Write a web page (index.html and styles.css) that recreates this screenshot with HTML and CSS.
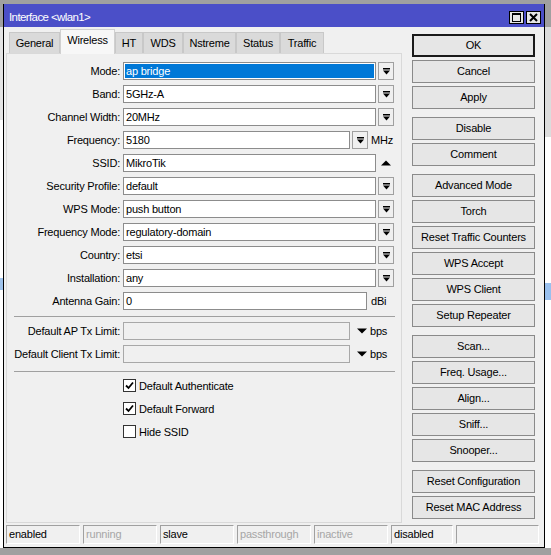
FILE: index.html
```html
<!DOCTYPE html>
<html>
<head>
<meta charset="utf-8">
<link rel="stylesheet" href="styles.css">
</head>
<body>
<div class="screen">
  <div class="bg-strip bg-left"></div>
  <div class="window">
    <div class="titlebar">
      <span class="title">Interface &lt;wlan1&gt;</span>
      <div class="tbtns">
        <span class="tbtn"><svg width="9" height="9" viewBox="0 0 9 9"><rect x="0.5" y="0.5" width="8" height="8" fill="none" stroke="#000"/><rect x="0" y="0" width="9" height="2" fill="#000"/></svg></span>
        <span class="tbtn"><svg width="9" height="9" viewBox="0 0 9 9"><path d="M1 1L8 8M8 1L1 8" stroke="#000" stroke-width="2"/></svg></span>
      </div>
    </div>
    <div class="content">
      <div class="leftcol">
        <div class="tabs">
          <div class="tab t-general">General</div>
          <div class="tab active t-wireless">Wireless</div>
          <div class="tab t-ht">HT</div>
          <div class="tab t-wds">WDS</div>
          <div class="tab t-nstreme">Nstreme</div>
          <div class="tab t-status">Status</div>
          <div class="tab t-traffic">Traffic</div>
        </div>
        <div class="panel">
          <div class="fields">
            <div class="row"><label class="lbl">Mode:</label><div class="inp w-full selected"><span class="sel">ap bridge</span></div><span class="dd"><svg width="7" height="7" viewBox="0 0 7 7"><rect width="7" height="1.5"/><path d="M0 2.5H7L3.5 6.5Z"/></svg></span></div>
            <div class="row"><label class="lbl">Band:</label><div class="inp w-full">5GHz-A</div><span class="dd"><svg width="7" height="7" viewBox="0 0 7 7"><rect width="7" height="1.5"/><path d="M0 2.5H7L3.5 6.5Z"/></svg></span></div>
            <div class="row"><label class="lbl">Channel Width:</label><div class="inp w-full">20MHz</div><span class="dd"><svg width="7" height="7" viewBox="0 0 7 7"><rect width="7" height="1.5"/><path d="M0 2.5H7L3.5 6.5Z"/></svg></span></div>
            <div class="row"><label class="lbl">Frequency:</label><div class="inp w-freq">5180</div><span class="dd"><svg width="7" height="7" viewBox="0 0 7 7"><rect width="7" height="1.5"/><path d="M0 2.5H7L3.5 6.5Z"/></svg></span><span class="unit u-mhz">MHz</span></div>
            <div class="row"><label class="lbl">SSID:</label><div class="inp w-full">MikroTik</div><span class="up"><svg width="10" height="6" viewBox="0 0 10 6"><path d="M0 5.5H10L5 0.5Z"/></svg></span></div>
            <div class="row"><label class="lbl">Security Profile:</label><div class="inp w-full">default</div><span class="dd"><svg width="7" height="7" viewBox="0 0 7 7"><rect width="7" height="1.5"/><path d="M0 2.5H7L3.5 6.5Z"/></svg></span></div>
            <div class="row"><label class="lbl">WPS Mode:</label><div class="inp w-full">push button</div><span class="dd"><svg width="7" height="7" viewBox="0 0 7 7"><rect width="7" height="1.5"/><path d="M0 2.5H7L3.5 6.5Z"/></svg></span></div>
            <div class="row"><label class="lbl">Frequency Mode:</label><div class="inp w-full">regulatory-domain</div><span class="dd"><svg width="7" height="7" viewBox="0 0 7 7"><rect width="7" height="1.5"/><path d="M0 2.5H7L3.5 6.5Z"/></svg></span></div>
            <div class="row"><label class="lbl">Country:</label><div class="inp w-full">etsi</div><span class="dd"><svg width="7" height="7" viewBox="0 0 7 7"><rect width="7" height="1.5"/><path d="M0 2.5H7L3.5 6.5Z"/></svg></span></div>
            <div class="row"><label class="lbl">Installation:</label><div class="inp w-full">any</div><span class="dd"><svg width="7" height="7" viewBox="0 0 7 7"><rect width="7" height="1.5"/><path d="M0 2.5H7L3.5 6.5Z"/></svg></span></div>
            <div class="row"><label class="lbl">Antenna Gain:</label><div class="inp w-gain">0</div><span class="unit u-dbi">dBi</span></div>
          </div>
          <div class="sep"></div>
          <div class="fields limits">
            <div class="row"><label class="lbl">Default AP Tx Limit:</label><div class="inp w-limit disabled"></div><span class="down"><svg width="10" height="6" viewBox="0 0 10 6"><path d="M0 0.5H10L5 5.5Z"/></svg></span><span class="unit u-bps">bps</span></div>
            <div class="row"><label class="lbl">Default Client Tx Limit:</label><div class="inp w-limit disabled"></div><span class="down"><svg width="10" height="6" viewBox="0 0 10 6"><path d="M0 0.5H10L5 5.5Z"/></svg></span><span class="unit u-bps">bps</span></div>
          </div>
          <div class="sep sep2"></div>
          <div class="checks">
            <div class="check"><span class="box"><svg width="9" height="9" viewBox="0 0 9 9"><path d="M1 4.5L3.5 7L8 1.5" fill="none" stroke="#000" stroke-width="1.8"/></svg></span><span>Default Authenticate</span></div>
            <div class="check"><span class="box"><svg width="9" height="9" viewBox="0 0 9 9"><path d="M1 4.5L3.5 7L8 1.5" fill="none" stroke="#000" stroke-width="1.8"/></svg></span><span>Default Forward</span></div>
            <div class="check"><span class="box"></span><span>Hide SSID</span></div>
          </div>
        </div>
      </div>
      <div class="btns">
        <div class="group">
          <div class="btn default">OK</div>
          <div class="btn">Cancel</div>
          <div class="btn">Apply</div>
        </div>
        <div class="group">
          <div class="btn">Disable</div>
          <div class="btn">Comment</div>
        </div>
        <div class="group">
          <div class="btn">Advanced Mode</div>
          <div class="btn">Torch</div>
          <div class="btn">Reset Traffic Counters</div>
          <div class="btn">WPS Accept</div>
          <div class="btn">WPS Client</div>
          <div class="btn">Setup Repeater</div>
        </div>
        <div class="group">
          <div class="btn">Scan...</div>
          <div class="btn">Freq. Usage...</div>
          <div class="btn">Align...</div>
          <div class="btn">Sniff...</div>
          <div class="btn">Snooper...</div>
        </div>
        <div class="group">
          <div class="btn">Reset Configuration</div>
          <div class="btn">Reset MAC Address</div>
        </div>
      </div>
    </div>
    <div class="statusbar">
      <div class="cell c-w">enabled</div>
      <div class="cell c-w dim">running</div>
      <div class="cell c-w">slave</div>
      <div class="cell c-w dim">passthrough</div>
      <div class="cell c-w dim">inactive</div>
      <div class="cell c-dis">disabled</div>
      <div class="cell c-last"></div>
    </div>
  </div>
  <div class="bg-strip bg-right"></div>
</div>
</body>
</html>
```
FILE: styles.css
```css
* { box-sizing: border-box; }
html, body { margin: 0; padding: 0; }
body {
  width: 551px;
  height: 555px;
  overflow: hidden;
  background: #a0a0a0;
  font-family: "Liberation Sans", Arial, sans-serif;
  font-size: 11px;
  letter-spacing: -0.2px;
  color: #000;
}
.screen { display: flex; align-items: flex-start; height: 555px; }
.bg-strip { height: 555px; flex: none; }
.bg-left {
  width: 3px;
  background: linear-gradient(to bottom, #a0a0a0 0, #a0a0a0 27px, #e4e4e4 27px, #e4e4e4 120px, #ffffff 120px, #ffffff 278px, #9fc3ec 278px, #9fc3ec 290px, #ffffff 290px, #ffffff 548px, #a0a0a0 548px);
}
.bg-right {
  width: 6px;
  background: linear-gradient(to bottom, #a0a0a0 0, #a0a0a0 27px, #dcdcdc 27px, #dcdcdc 137px, #ffffff 137px, #ffffff 283px, #99c0ee 283px, #99c0ee 300px, #ffffff 300px, #ffffff 548px, #a0a0a0 548px);
}
.window {
  width: 542px;
  height: 544px;
  margin-top: 4px;
  border: 1px solid #000;
  border-top: 0;
  background: #f0f0f0;
  display: flex;
  flex-direction: column;
  flex: none;
}
.titlebar {
  height: 23px;
  background: #4b4fc8;
  display: flex;
  justify-content: space-between;
  align-items: center;
  padding: 3px 3px 0 5px;
  color: #fff;
  flex: none;
}
.title { font-size: 11.5px; letter-spacing: -0.6px; }
.tbtns { display: flex; gap: 2px; align-self: flex-end; margin-bottom: 3px; }
.tbtn {
  width: 15px;
  height: 13px;
  background: #e6e6e6;
  border: 1px solid #000;
  display: flex;
  align-items: center;
  justify-content: center;
}
.tbtn svg { display: block; }
.content {
  display: flex;
  gap: 10px;
  padding: 2px 9px 0 2px;
  flex: none;
}
.leftcol { width: 396px; display: flex; flex-direction: column; }
.tabs { display: flex; align-items: flex-end; height: 24px; padding-left: 3px; }
.tab {
  height: 21px;
  background: #dadada;
  border: 1px solid #c8c8c8;
  border-bottom: 0;
  text-align: center;
  line-height: 20px;
}
.tab.active {
  height: 25px;
  background: #f7f7f7;
  border-color: #d0d0d0;
  line-height: 20px;
  margin-bottom: -1px;
  position: relative;
  z-index: 1;
}
.t-general { width: 51px; }
.t-wireless { width: 55px; }
.t-ht { width: 28px; }
.t-wds { width: 40px; }
.t-nstreme { width: 53px; }
.t-status { width: 44px; }
.t-traffic { width: 44px; }
.panel {
  height: 470px;
  border: 1px solid #d9d9d9;
  background: #f0f0f0;
  padding-top: 8px;
}
.fields { display: flex; flex-direction: column; gap: 5px; }
.row { display: flex; align-items: center; height: 18px; }
.lbl { width: 113px; margin-right: 3px; text-align: right; white-space: nowrap; flex: none; }
.inp {
  height: 18px;
  background: #fff;
  border: 1px solid #8c8c8c;
  padding: 0 0 0 2px;
  line-height: 16px;
  white-space: nowrap;
  overflow: hidden;
  flex: none;
}
.inp.selected { padding: 1px; }
.sel {
  display: block;
  height: 14px;
  line-height: 14px;
  background: #0078d7;
  color: #fff;
  padding-left: 1px;
}
.inp.disabled { background: #f0f0f0; border-color: #a8a8a8; }
.w-full { width: 253px; }
.w-freq { width: 227px; }
.w-gain { width: 244px; }
.w-limit { width: 227px; }
.dd {
  width: 16px;
  height: 18px;
  margin-left: 2px;
  border: 1px solid #a0a0a0;
  background: #f0f0f0;
  display: flex;
  align-items: center;
  justify-content: center;
  flex: none;
}
.dd svg, .up svg, .down svg, .box svg { display: block; }
.up { margin-left: 5px; display: flex; }
.down { margin-left: 7px; display: flex; }
.unit { flex: none; }
.u-mhz { margin-left: 3px; }
.u-dbi { margin-left: 4px; }
.u-bps { margin-left: 3px; }
.sep {
  margin: 6px 0 0 7px;
  width: 381px;
  height: 1px;
  background: #a0a0a0;
}
.limits { margin-top: 5px; gap: 5px; }
.sep2 { margin-top: 8px; }
.checks { display: flex; flex-direction: column; gap: 10px; margin-top: 7px; padding-left: 116px; }
.check { display: flex; align-items: center; height: 13px; }
.box {
  width: 13px;
  height: 13px;
  border: 1px solid #333;
  background: #fff;
  margin-right: 3px;
  display: flex;
  align-items: center;
  justify-content: center;
  flex: none;
}
.btns { width: 123px; display: flex; flex-direction: column; gap: 8px; padding-top: 5px; }
.group { display: flex; flex-direction: column; gap: 3px; }
.btn {
  height: 23px;
  border: 1px solid #8a8a8a;
  background: #e6e6e6;
  text-align: center;
  line-height: 21px;
  white-space: nowrap;
}
.btn.default { border: 2px solid #1a1a1a; line-height: 19px; }
.statusbar {
  display: flex;
  gap: 3px;
  margin-top: 2px;
  padding-left: 2px;
  height: 19px;
  flex: none;
}
.cell {
  height: 19px;
  border: 1px solid;
  border-color: #a0a0a0 #ffffff #ffffff #a0a0a0;
  padding-left: 2px;
  line-height: 17px;
  white-space: nowrap;
  overflow: hidden;
}
.cell.dim { color: #a6a6a6; }
.c-w { width: 74px; }
.c-dis { width: 62px; }
.c-last { width: 83px; }
```
